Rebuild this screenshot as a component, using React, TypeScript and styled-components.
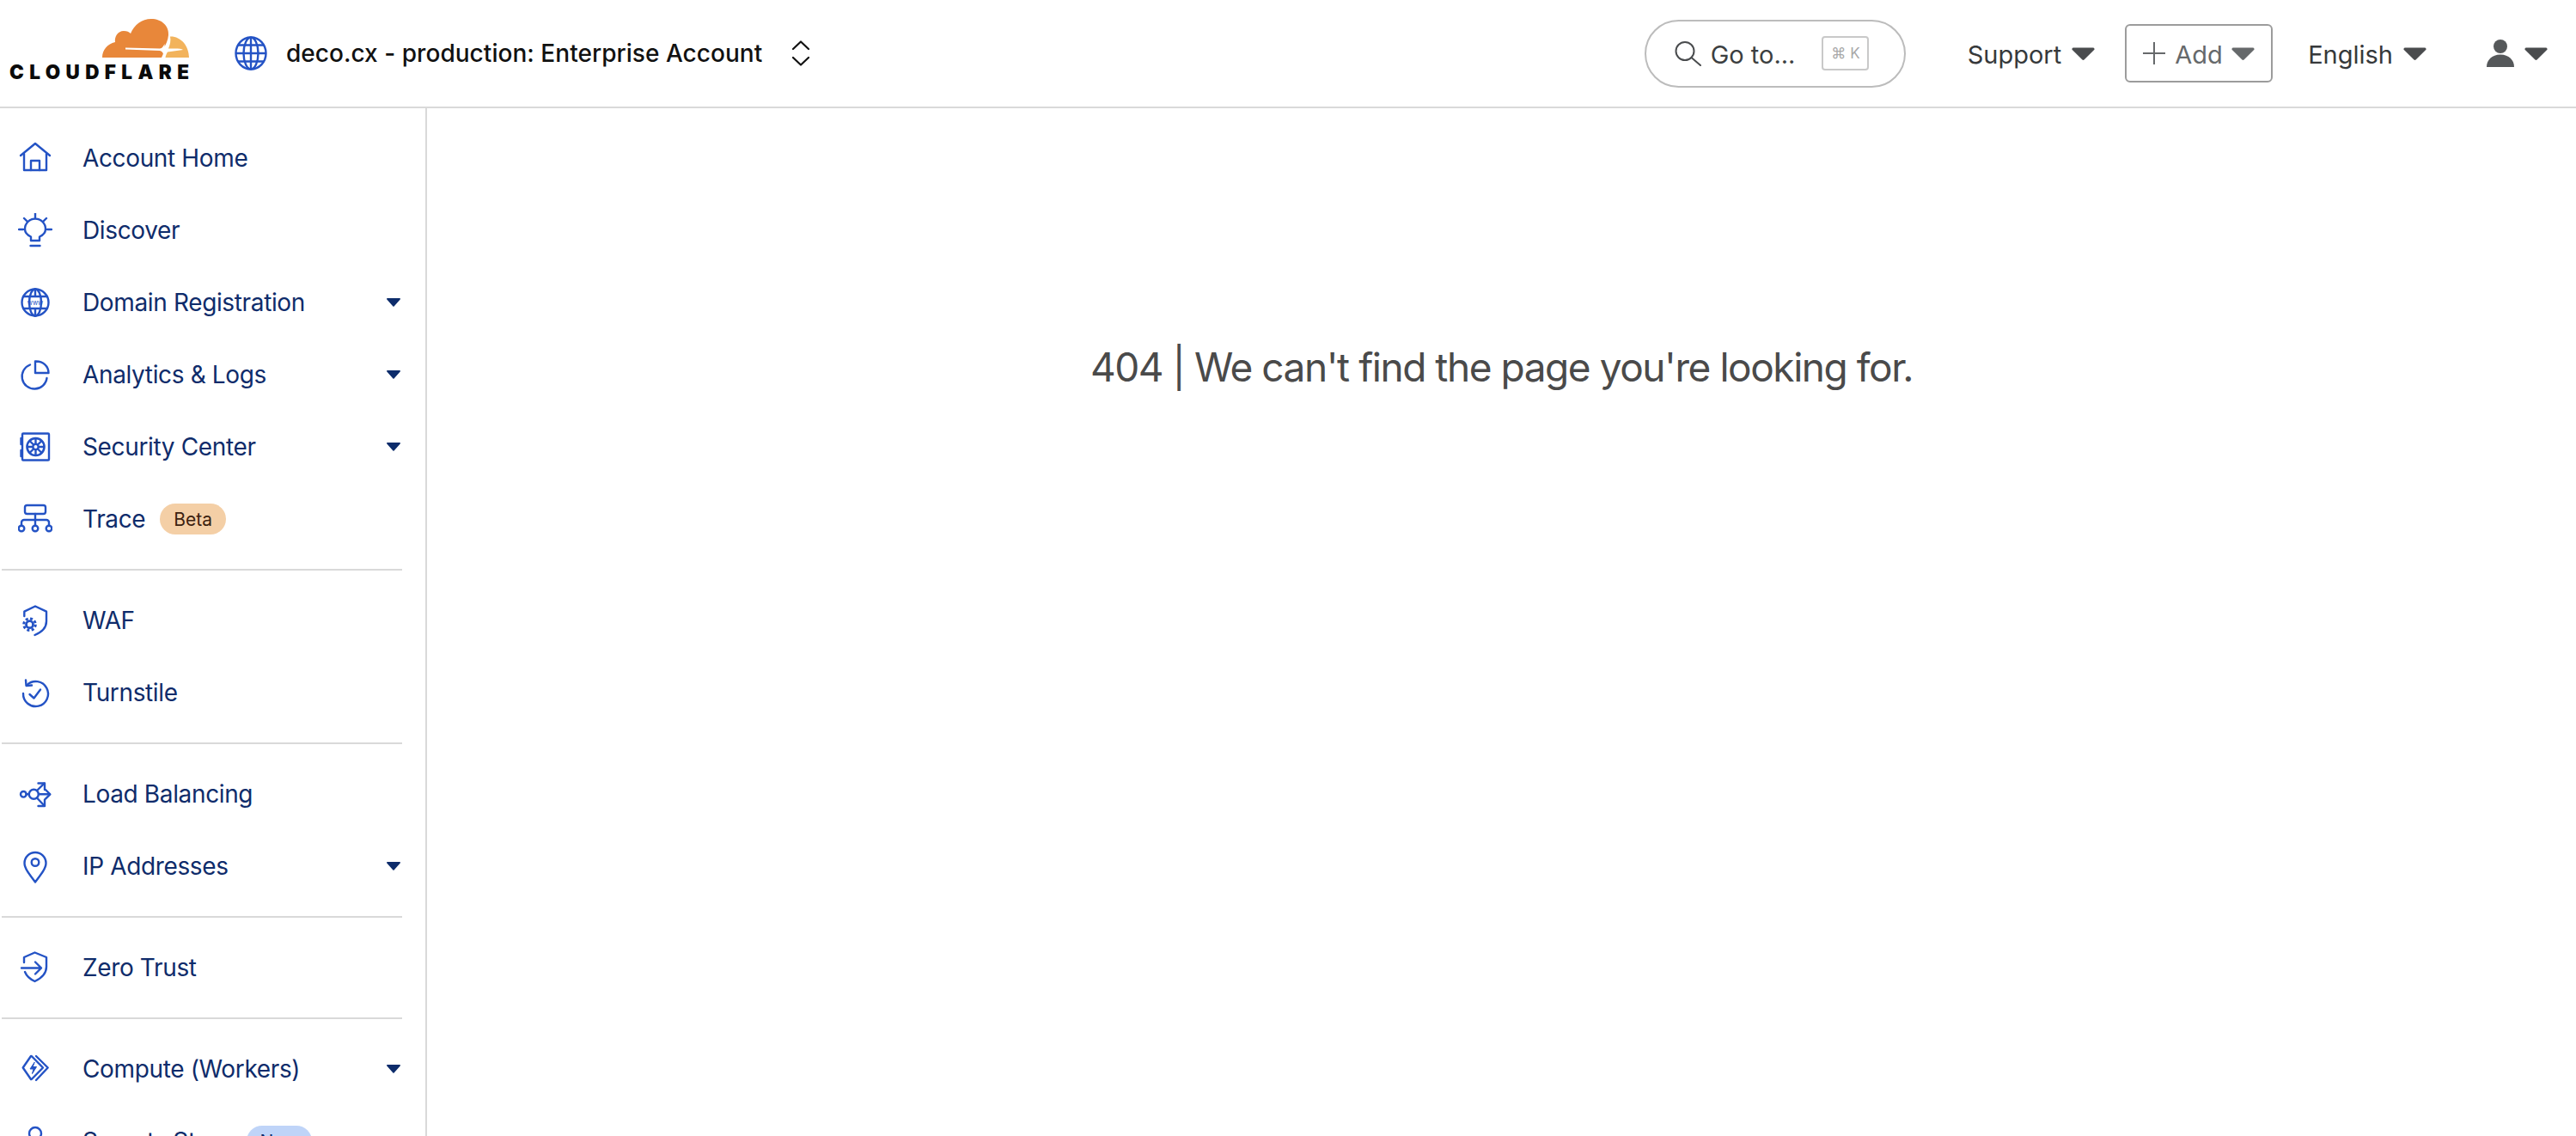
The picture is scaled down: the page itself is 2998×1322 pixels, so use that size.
import React from "react";
import styled, { createGlobalStyle } from "styled-components";

const Global = createGlobalStyle`
  html, body { margin: 0; padding: 0; background: #fff; height: 100%; overflow: hidden; }
  #root { height: 100%; }
  * { box-sizing: border-box; }
  body { font-family: Inter, "Liberation Sans", sans-serif; }
`;

const Page = styled.div`
  display: flex;
  flex-direction: column;
  height: 100vh;
  overflow: hidden;
`;

const TopBar = styled.header`
  display: flex;
  align-items: center;
  flex: 0 0 126px;
  height: 126px;
  padding: 0 33px 0 10px;
  border-bottom: 2px solid #d9d9d9;
`;

const Logo = styled.div`
  display: flex;
  flex-direction: column;
  align-items: flex-end;
  width: 210px;
  margin-top: -10px;
`;

const LogoWord = styled.span`
  font-family: Inter, "Liberation Sans", sans-serif;
  font-size: 22.5px;
  font-weight: 900;
  line-height: 17px;
  letter-spacing: 6.4px;
  margin-top: 8px;
  margin-right: -6.4px;
  color: #0b0b0b;
  white-space: nowrap;
`;

const Account = styled.div`
  display: flex;
  align-items: center;
  margin-left: 53px;
  gap: 22px;
`;

const AccountName = styled.span`
  font-size: 28px;
  font-weight: 500;
  letter-spacing: 0.04px;
  color: #111;
  white-space: nowrap;
`;

const Chevrons = styled.svg`
  margin-left: 12px;
  display: block;
`;

const RightCluster = styled.div`
  display: flex;
  align-items: center;
  margin-left: auto;
`;

const SearchPill = styled.div`
  display: flex;
  align-items: center;
  width: 304px;
  height: 79px;
  margin-right: 72px;
  padding-left: 33px;
  border: 2px solid #bcbcbc;
  border-radius: 40px;
`;

const SearchLabel = styled.span`
  margin-left: 11px;
  padding-top: 2px;
  font-size: 29px;
  color: #3c3f41;
  white-space: nowrap;
`;

const Kbd = styled.span`
  display: flex;
  align-items: center;
  justify-content: center;
  width: 55px;
  height: 40px;
  margin-left: 31px;
  border: 2px solid #c9c9c9;
  border-radius: 4px;
  font-size: 17px;
  color: #a8a8a8;
  white-space: nowrap;
`;

const Menu = styled.div<{ $after?: number }>`
  display: flex;
  align-items: center;
  gap: 12px;
  margin-right: ${(p) => p.$after ?? 0}px;
  font-size: 29px;
  color: #36393b;
  white-space: nowrap;
`;

const MenuLabel = styled.span`
  padding-top: 2px;
`;

const AddButton = styled.div`
  display: flex;
  align-items: center;
  width: 172px;
  height: 68px;
  margin-right: 41px;
  padding-left: 19px;
  border: 2px solid #9c9c9c;
  border-radius: 6px;
  font-size: 29px;
  color: #66696b;
`;

const AddLabel = styled.span`
  margin: 0 10px 0 11px;
  padding-top: 2px;
`;

const Body = styled.div`
  display: flex;
  flex: 1;
  min-height: 0;
`;

const Sidebar = styled.nav`
  flex: 0 0 497px;
  width: 497px;
  border-right: 2px solid #d9d9d9;
  overflow: hidden;
`;

const Section = styled.div`
  padding: 16px 0;
`;

const Divider = styled.div`
  width: 466px;
  height: 2px;
  margin-left: 2px;
  background: #d9d9d9;
`;

const Row = styled.div`
  display: flex;
  align-items: center;
  height: 84px;
  padding: 0 29px 0 21px;
  color: #0f2c6b;
`;

const IconBox = styled.svg`
  flex: 0 0 40px;
  width: 40px;
  height: 40px;
  fill: none;
  stroke: #2453c5;
  stroke-width: 2.4;
  stroke-linecap: round;
  stroke-linejoin: round;
`;

const RowLabel = styled.span`
  margin-left: 35px;
  font-size: 28px;
  letter-spacing: -0.36px;
  white-space: nowrap;
`;

const Badge = styled.span<{ $tone: "beta" | "new" }>`
  display: inline-flex;
  align-items: center;
  justify-content: center;
  height: 36px;
  margin-left: 17px;
  padding: 0 ${(p) => (p.$tone === "beta" ? 16 : 16)}px;
  border-radius: 18px;
  font-size: 21px;
  background: ${(p) => (p.$tone === "beta" ? "#f4cfa6" : "#bfd4f8")};
  color: ${(p) => (p.$tone === "beta" ? "#3c2210" : "#0f2c6b")};
`;

const RowCaret = styled.svg`
  margin-left: auto;
  display: block;
`;

const Main = styled.main`
  flex: 1;
  padding-top: 271px;
  text-align: center;
`;

const NotFound = styled.h1`
  margin: 0;
  font-size: 46px;
  font-weight: 400;
  line-height: 60px;
  letter-spacing: -1.45px;
  color: #4a4a4a;
`;

const Caret = ({ color = "#4a4c4e" }: { color?: string }) => (
  <svg width="27" height="15" viewBox="0 0 27 15" style={{ display: "block" }}>
    <path d="M2 0.5 H25 a1.6 1.6 0 0 1 1.2 2.6 L14.8 14.2 a1.8 1.8 0 0 1 -2.6 0 L0.8 3.1 A1.6 1.6 0 0 1 2 0.5 Z" fill={color} />
  </svg>
);

const Icons: Record<string, React.ReactNode> = {
  home: (
    <>
      <path d="M3 17 20 3l17 14" />
      <path d="M7 15v19h26V15" />
      <path d="M15 34V23h10v11" />
    </>
  ),
  bulb: (
    <>
      <path d="M20 0v5M1 19h5M34 19h5M7 6l4 4M33 6l-4 4" />
      <path d="M15 32v-4.500c-4.500-2-7-5.500-7-9a12 12 0 0 1 24 0c0 3.500-2.500 7-7 9V32z" />
      <path d="M14.500 38h11" />
    </>
  ),
  globe: (
    <>
      <circle cx="20" cy="20" r="15.500" />
      <ellipse cx="20" cy="20" rx="7" ry="15.500" />
      <path d="M20 4.500v7M20 28.500v7M6 13h28M6 27h28" />
      <text x="20" y="22.500" fontSize="7.500" textAnchor="middle" fill="#2453c5" stroke="none" fontFamily="Inter, sans-serif">www</text>
    </>
  ),
  pie: (
    <>
      <path d="M20 4.500V18h15.500C35.500 10 29 4 20 4.500z" />
      <path d="M14 8.500A14.500 14.500 0 1 0 33.500 24" />
    </>
  ),
  safe: (
    <>
      <rect x="5" y="4.500" width="31" height="31" rx="1" />
      <path d="M3.500 10v7M3.500 24v7" />
      <circle cx="20.500" cy="20" r="10" strokeWidth="2.600" />
      <circle cx="20.500" cy="20" r="3.200" />
      <path d="M20.500 10.500v6M20.500 23.500v6M11 20h6M24 20h6M14 13.500l4 4M27 13.500l-4 4M14 26.500l4-4M27 26.500l-4-4" />
    </>
  ),
  trace: (
    <>
      <rect x="8" y="4" width="24" height="10" rx="2.500" />
      <path d="M20 14v13.500M4 27.500V24a3 3 0 0 1 3-3h26a3 3 0 0 1 3 3v3.500" />
      <circle cx="4" cy="31" r="3.300" />
      <circle cx="20" cy="31" r="3.300" />
      <circle cx="36" cy="31" r="3.300" />
    </>
  ),
  waf: (
    <>
      <path d="M7.300 15V9.700L20 3.500l13 6.200V21c0 7-5 12.500-13.500 16" />
      <circle cx="13.500" cy="24.700" r="4" strokeWidth="2.800" />
      <circle cx="13.500" cy="24.700" r="6.800" strokeWidth="3" strokeDasharray="3 2.400" strokeLinecap="butt" />
    </>
  ),
  turnstile: (
    <>
      <path d="M10.500 11A14.500 14.500 0 1 1 6 21" />
      <path d="M9 5.500l.5 6.500 6.500-.5" />
      <path d="M13.500 22l5 4.500 7.500-10" />
    </>
  ),
  balance: (
    <>
      <circle cx="6.300" cy="20.300" r="3.300" />
      <circle cx="18.300" cy="20.300" r="5.500" />
      <path d="M9.600 20.300h3.200M22 16l8.500-8.300M24 20.300h13M22 24.500l8.500 9" />
      <path d="M23.500 7.500h7.500v7.500M32 15l5.300 5.300-5.300 5.300M31 26.500v7.500h-7.500" />
    </>
  ),
  pin: (
    <>
      <path d="M20 38.500C12 28 7.500 22 7.500 16.500a12.500 12.500 0 0 1 25 0C32.500 22 28 28 20 38.500z" />
      <circle cx="20" cy="15.500" r="4.300" />
    </>
  ),
  zero: (
    <>
      <path d="M7 14V8l12.500-5.500L33 8v11c0 7-5 13-13.500 17C14 33.500 10 30 8 25" />
      <path d="M4 20.500h23M20 13.500l7 7-7 7" />
    </>
  ),
  workers: (
    <>
      <path d="M15 5 5.700 18.500 15 32" />
      <path d="M15.700 5 29 18.500 15.700 32M21 5l13.700 13.500L21 33" />
      <path d="M19 12.500l-5 7.500h4l-1.500 5.500 5-8h-4z" fill="#2453c5" strokeWidth="1" />
    </>
  ),
  key: (
    <>
      <circle cx="20" cy="11" r="7" />
      <path d="M20 18v18M20 28h6M20 33h5" />
    </>
  ),
};

type Item = { label: string; icon: string; more?: boolean; badge?: { text: string; tone: "beta" | "new" } };

const sections: Item[][] = [
  [
    { label: "Account Home", icon: "home" },
    { label: "Discover", icon: "bulb" },
    { label: "Domain Registration", icon: "globe", more: true },
    { label: "Analytics & Logs", icon: "pie", more: true },
    { label: "Security Center", icon: "safe", more: true },
    { label: "Trace", icon: "trace", badge: { text: "Beta", tone: "beta" } },
  ],
  [
    { label: "WAF", icon: "waf" },
    { label: "Turnstile", icon: "turnstile" },
  ],
  [
    { label: "Load Balancing", icon: "balance" },
    { label: "IP Addresses", icon: "pin", more: true },
  ],
  [{ label: "Zero Trust", icon: "zero" }],
  [
    { label: "Compute (Workers)", icon: "workers", more: true },
    { label: "Secrets Store", icon: "key", badge: { text: "New", tone: "new" } },
  ],
];

const CloudLogo = () => (
  <svg width="101" height="45" viewBox="0 0 101 45" style={{ display: "block" }}>
    <path
      d="M0 45C0 36 6 29 15 27C14 21 18 14 25 14C29 14 31 15 33 17C37 7 46 0 57 0C69 0 78 8 77 19C76.500 25 74 30 71.500 34C72.500 37 71 41 69 45Z"
      fill="#e8873a"
    />
    <path
      d="M79 20.500C91 20 101 31 101 45H73.500C74 42 75 40 76 38.500C82 37.500 88 37 94 36C92 34 85 34.500 77 34.500C79 30 80 25 79 20.500Z"
      fill="#f2b35c"
    />
    <path d="M27 33.500L67 34.500C70 34.500 71.500 31 72.500 29C72.500 32 73 35 75.500 36C73 37 72 40 71.500 43C71 40 70 37.500 67 37L27 35.500Z" fill="#fff" />
  </svg>
);

export default function App() {
  return (
    <Page>
      <Global />
      <TopBar>
        <Logo>
          <CloudLogo />
          <LogoWord>CLOUDFLARE</LogoWord>
        </Logo>
        <Account>
          <svg width="38" height="40" viewBox="0 0 38 40" fill="none" stroke="#2453c5" strokeWidth="2.400" style={{ display: "block" }}>
            <ellipse cx="19" cy="20" rx="17.500" ry="18.500" />
            <ellipse cx="19" cy="20" rx="8.500" ry="18.500" />
            <path d="M19 1.500v37M1.500 20h35M4 10.500h30M4 29.500h30" />
          </svg>
          <AccountName>deco.cx - production: Enterprise Account</AccountName>
          <Chevrons width="22" height="30" viewBox="0 0 22 30" fill="none" stroke="#111" strokeWidth="2.200" strokeLinecap="round" strokeLinejoin="round">
            <path d="M2 10 11 1.500 20 10M2 20l9 8.500 9-8.500" />
          </Chevrons>
        </Account>
        <RightCluster>
          <SearchPill>
            <svg width="31" height="29" viewBox="0 0 31 29" fill="none" stroke="#4a4c4e" strokeWidth="2" strokeLinecap="round" style={{ display: "block" }}>
              <circle cx="12" cy="11.500" r="10.500" />
              <path d="M19.500 19 30 28" />
            </svg>
            <SearchLabel>Go to...</SearchLabel>
            <Kbd>⌘ K</Kbd>
          </SearchPill>
          <Menu $after={35}>
            <MenuLabel>Support</MenuLabel>
            <Caret />
          </Menu>
          <AddButton>
            <svg width="26" height="26" viewBox="0 0 26 26" fill="none" stroke="#66696b" strokeWidth="2" style={{ display: "block" }}>
              <path d="M13 0v26M0 13h26" />
            </svg>
            <AddLabel>Add</AddLabel>
            <Caret color="#66696b" />
          </AddButton>
          <Menu $after={70}>
            <MenuLabel>English</MenuLabel>
            <Caret />
          </Menu>
          <Menu>
            <svg width="32" height="32" viewBox="0 0 32 32" fill="#55585a" style={{ display: "block" }}>
              <ellipse cx="16" cy="8" rx="8" ry="8" />
              <path d="M0 32C0 24 6 17.500 16 17.500S32 24 32 32Z" />
            </svg>
            <Caret />
          </Menu>
        </RightCluster>
      </TopBar>
      <Body>
        <Sidebar>
          {sections.map((items, i) => (
            <React.Fragment key={i}>
              {i > 0 && <Divider />}
              <Section>
                {items.map((item) => (
                  <Row key={item.label}>
                    <IconBox viewBox="0 0 40 40">{Icons[item.icon]}</IconBox>
                    <RowLabel>{item.label}</RowLabel>
                    {item.badge && <Badge $tone={item.badge.tone}>{item.badge.text}</Badge>}
                    {item.more && (
                      <RowCaret width="16" height="10" viewBox="0 0 16 10">
                        <path d="M0.800 0H15.200a.8.8 0 0 1 .5 1.400L8.600 9.600a.9.9 0 0 1-1.200 0L.3 1.400A.8.8 0 0 1 .8 0Z" fill="#0d2c6b" />
                      </RowCaret>
                    )}
                  </Row>
                ))}
              </Section>
            </React.Fragment>
          ))}
        </Sidebar>
        <Main>
          <NotFound>404 | We can't find the page you're looking for.</NotFound>
        </Main>
      </Body>
    </Page>
  );
}
